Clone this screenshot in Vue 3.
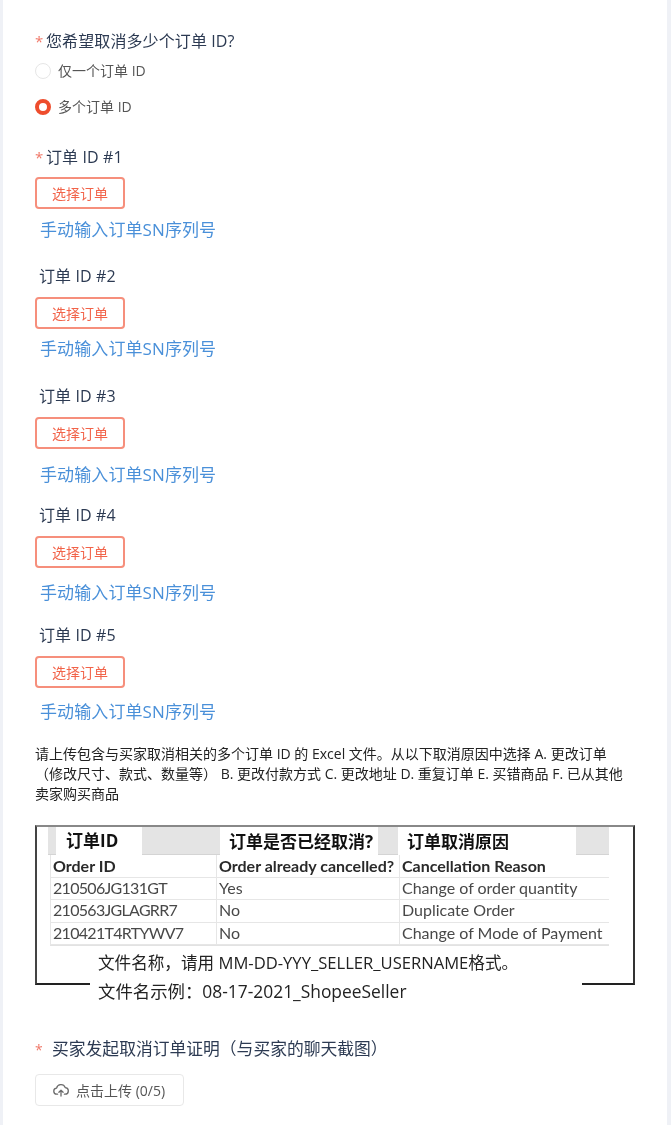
<template>
  <div class="page">
    <div class="form">
      <div class="label first"><span class="star">*</span>您希望取消多少个订单 ID?</div>
      <div class="radio-row">
        <span class="radio"></span>
        <span class="radio-text">仅一个订单 ID</span>
      </div>
      <div class="radio-row second">
        <span class="radio checked"></span>
        <span class="radio-text">多个订单 ID</span>
      </div>

      <div class="orders">
        <div v-for="order in orders" :key="order.id" class="order" :style="{ height: order.height + 'px' }">
          <div class="label" :class="{ plain: !order.required }">
            <span v-if="order.required" class="star">*</span>订单 ID #{{ order.id }}
          </div>
          <button class="pick-btn" :style="{ marginTop: order.btnGap + 'px' }">选择订单</button>
          <a class="manual-link" :style="{ marginTop: order.linkGap + 'px' }">手动输入订单SN序列号</a>
        </div>
      </div>

      <div class="hint">
        <div>请上传包含与买家取消相关的多个订单 ID 的 Excel 文件。从以下取消原因中选择 A. 更改订单</div>
        <div>（修改尺寸、款式、数量等） B. 更改付款方式 C. 更改地址 D. 重复订单 E. 买错商品 F. 已从其他</div>
        <div>卖家购买商品</div>
      </div>

      <div class="sample">
        <div class="band">
          <span class="tab tab-1">订单ID</span>
          <span class="tab tab-2">订单是否已经取消?</span>
          <span class="tab tab-3">订单取消原因</span>
        </div>
        <div class="sheet">
          <div v-for="(row, i) in rows" :key="i" class="sheet-row" :class="{ head: i === 0 }">
            <span v-for="cell in row" :key="cell">{{ cell }}</span>
          </div>
        </div>
        <div class="caption">
          <div class="caption-1">文件名称，请用 MM-DD-YYY_SELLER_USERNAME格式。</div>
          <div class="caption-2">文件名示例：08-17-2021_ShopeeSeller</div>
        </div>
      </div>

      <div class="label proof"><span class="star small">*</span>买家发起取消订单证明（与买家的聊天截图）</div>
      <button class="upload-btn">
        <svg width="16" height="16" viewBox="0 0 16 16" fill="none" stroke="#6b6b6b" stroke-width="1.3" stroke-linecap="round" stroke-linejoin="round">
          <path d="M4.6 12.2H4a3 3 0 0 1-.4-6A4.5 4.5 0 0 1 12.2 5.6a3.3 3.3 0 0 1-.4 6.6h-.4" />
          <path d="M8 14V8.4M5.9 10.3 8 8.2l2.1 2.1" />
        </svg>
        <span>点击上传 (0/5)</span>
      </button>
    </div>
  </div>
</template>

<script setup>
const orders = [
  { id: 1, required: true, height: 119, btnGap: 8, linkGap: 9 },
  { id: 2, required: false, height: 120, btnGap: 9, linkGap: 8 },
  { id: 3, required: false, height: 119, btnGap: 9, linkGap: 14 },
  { id: 4, required: false, height: 120, btnGap: 9, linkGap: 13 },
  { id: 5, required: false, height: 120, btnGap: 9, linkGap: 12 },
];

const rows = [
  ["Order ID", "Order already cancelled?", "Cancellation Reason"],
  ["210506JG131GT", "Yes", "Change of order quantity"],
  ["210563JGLAGRR7", "No", "Duplicate Order"],
  ["210421T4RTYWV7", "No", "Change of Mode of Payment"],
];
</script>

<style>
html,
body {
  margin: 0;
  background: #eff1f6;
}
</style>

<style scoped>
.page {
  width: 671px;
  height: 1125px;
  overflow: hidden;
  box-sizing: border-box;
  padding: 0 4px 0 3px;
  font-family: "Open Sans", "Noto Sans CJK SC", sans-serif;
}

.form {
  height: 100%;
  box-sizing: border-box;
  background: #fff;
  padding: 29px 0 0 32px;
  filter: blur(0.45px);
}

.label {
  font-size: 16px;
  line-height: 24px;
  color: #2c3a52;
  white-space: nowrap;
  letter-spacing: 0.1px;
}

.label.plain {
  padding-left: 4px;
}

.star {
  display: inline-block;
  width: 11px;
  color: #f0796a;
  font-size: 15px;
}

.star.small {
  width: 17px;
  font-size: 14px;
}

.radio-row {
  display: flex;
  align-items: center;
  gap: 7px;
  height: 20px;
  margin-top: 8px;
  font-size: 14px;
  color: #555;
}

.radio-row.second {
  margin-top: 16px;
}

.radio-text {
  margin-top: -2px;
}

.radio {
  width: 16px;
  height: 16px;
  box-sizing: border-box;
  border: 1.5px solid #e6e6e6;
  border-radius: 50%;
  background: #fff;
}

.radio.checked {
  border: 4.5px solid #ee4d2d;
}

.orders {
  margin-top: 28px;
}

.order {
  display: flex;
  flex-direction: column;
  align-items: flex-start;
}

.pick-btn {
  width: 90px;
  height: 32px;
  box-sizing: border-box;
  padding: 0;
  background: #fff;
  border: 2px solid #f68f7c;
  border-radius: 4px;
  color: #f2644a;
  font: inherit;
  font-size: 14px;
  flex: none;
}

.manual-link {
  padding-left: 5px;
  font-size: 17px;
  line-height: 24px;
  color: #4a90d9;
  letter-spacing: 0.1px;
}

.hint {
  padding-top: 1px;
  font-size: 14px;
  line-height: 20px;
  color: #222;
  white-space: nowrap;
}

.sample {
  position: relative;
  width: 600px;
  height: 160px;
  box-sizing: border-box;
  margin-top: 21px;
  border-top: 2px solid #888;
  border-left: 2px solid #444;
  border-right: 2px solid #333;
  border-bottom: 2px solid #222;
}

.band {
  display: flex;
  height: 27px;
  margin: 0 24px 0 11px;
  background: #e4e4e4;
  border-bottom: 1px solid #d4d4d4;
}

.tab {
  box-sizing: border-box;
  height: 28px;
  background: #fff;
  color: #111;
  font-weight: 700;
  font-size: 17px;
  line-height: 28px;
  white-space: nowrap;
}

.tab-1 {
  width: 86px;
  margin-left: 8px;
  padding-left: 10px;
}

.tab-2 {
  width: 158px;
  margin-left: 78px;
  padding-left: 9px;
  line-height: 30px;
}

.tab-3 {
  width: 178px;
  margin-left: 20px;
  padding-left: 9px;
  line-height: 30px;
}

.sheet {
  margin: 0 24px 0 13px;
  border-bottom: 1px solid #e2e2e2;
  font-family: Lato, "Noto Sans CJK SC", sans-serif;
}

.sheet-row {
  display: grid;
  grid-template-columns: 166px 183px 1fr;
  height: 22.5px;
  box-sizing: border-box;
  border-bottom: 1px solid #e6e6e6;
  font-size: 16px;
  line-height: 20px;
  color: #484848;
}

.sheet-row span {
  padding-left: 2px;
  border-left: 1px solid #e6e6e6;
  white-space: nowrap;
}

.sheet-row:not(.head) span:first-child {
  letter-spacing: -0.7px;
}

.sheet-row.head {
  line-height: 22px;
  color: #2a2a2a;
  font-weight: 700;
}

.caption {
  position: absolute;
  left: 53px;
  top: 121px;
  width: 492px;
  height: 39px;
  padding: 0 0 0 8px;
  box-sizing: border-box;
  background: #fff;
  line-height: 29px;
  color: #222;
  white-space: nowrap;
}

.caption-1 {
  font-size: 16.6px;
}

.caption-2 {
  font-size: 17.4px;
}

.proof {
  margin-top: 52px;
  font-size: 16.8px;
  letter-spacing: 0;
}

.upload-btn {
  display: flex;
  align-items: center;
  gap: 7px;
  width: 149px;
  height: 32px;
  box-sizing: border-box;
  margin-top: 12px;
  padding: 0 0 0 17px;
  background: #fff;
  border: 1px solid #e8e8e8;
  border-radius: 4px;
  color: #555;
  font: inherit;
  font-size: 14px;
}
</style>
